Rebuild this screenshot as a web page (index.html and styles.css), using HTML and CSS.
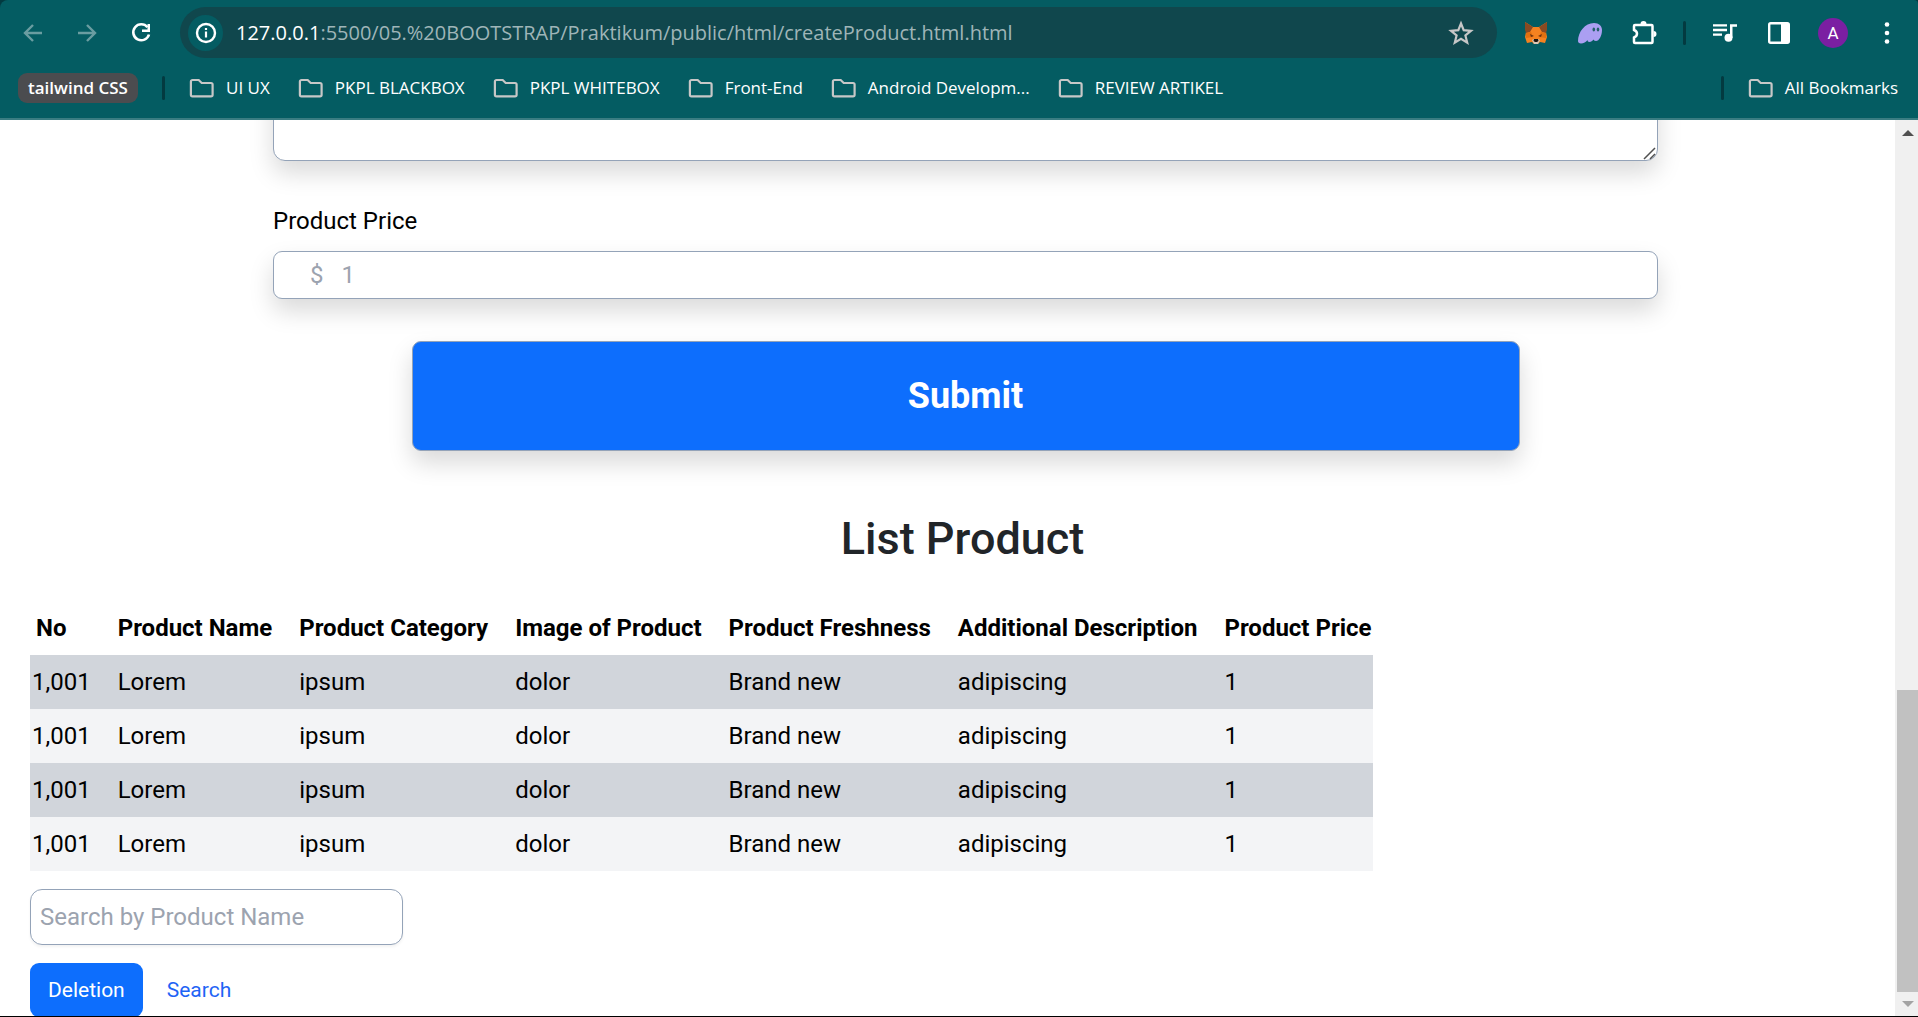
FILE: index.html
```html
<!DOCTYPE html>
<html lang="en">
<head>
<meta charset="utf-8">
<meta name="viewport" content="width=device-width, initial-scale=1">
<title>Create Product</title>
<link rel="stylesheet" href="styles.css">
</head>
<body>
<svg class="defs" aria-hidden="true">
  <symbol id="folder" viewBox="0 0 25 20"><path d="M3.5 2h6.2l3 3h9.3a1.6 1.6 0 0 1 1.6 1.600v10.200a1.600 1.600 0 0 1-1.600 1.600H3.500a1.600 1.600 0 0 1-1.600-1.600V3.600A1.600 1.600 0 0 1 3.500 2z" fill="none" stroke="#c7c7c7" stroke-width="2.200"/></symbol>
</svg>
<header class="chrome">
  <div class="toolbar">
    <button class="tool dim" aria-label="Back"><svg width="20" height="20" viewBox="0 0 20 20"><path d="M19 10H2.500M10 2l-8 8 8 8" fill="none" stroke="currentColor" stroke-width="2.400"/></svg></button>
    <button class="tool dim" aria-label="Forward"><svg width="20" height="20" viewBox="0 0 20 20"><path d="M1 10h16.500M10 2l8 8-8 8" fill="none" stroke="currentColor" stroke-width="2.400"/></svg></button>
    <button class="tool" aria-label="Reload"><svg width="22" height="22" viewBox="0 0 22 22"><path d="M17.500 5.200A8 8 0 1 0 19 12.500" fill="none" stroke="currentColor" stroke-width="2.600"/><path d="M20 2v8h-8V7.500h5.500V2z" fill="currentColor"/></svg></button>
    <div class="omnibox">
      <button class="info" aria-label="Site information"><svg width="22" height="22" viewBox="0 0 22 22"><circle cx="11" cy="11" r="9" fill="none" stroke="#fff" stroke-width="2.400"/><path d="M11 9.500v6M11 6v2" stroke="#fff" stroke-width="2.200"/></svg></button>
      <span class="url"><b>127.0.0.1</b>:5500/05.%20BOOTSTRAP/Praktikum/public/html/createProduct.html.html</span>
      <button class="star" aria-label="Bookmark this tab"><svg width="26" height="26" viewBox="0 0 26 26"><path d="M13 3.500l2.700 6.700 7.300.6-5.600 4.700 1.800 7.100L13 18.700l-6.200 3.900 1.800-7.100L3 10.800l7.300-.6z" fill="none" stroke="#c7c7c7" stroke-width="2.200"/></svg></button>
    </div>
    <button class="tool" aria-label="MetaMask"><svg width="24" height="24" viewBox="0 0 24 24"><path d="M1 1l8 5h6l8-5-1 10 1 5-2 6-5-1-2 2h-4l-2-2-5 1-2-6 1-5z" fill="#f58220"/><path d="M1 1l8 5-3 5-4 1-1-4zM23 1l-8 5 3 5 4 1 1-4z" fill="#8a4a22"/><path d="M2 12l5-1 2 5-7 1zM22 12l-5-1-2 5 7 1z" fill="#e2700f"/><path d="M6 13l4 2-3 1zM18 13l-4 2 3 1z" fill="#6d3310"/><path d="M8 19l2-1h4l2 1-2 4h-4z" fill="#d9c8b8"/><path d="M10 18h4l.5 2-1.500 1h-2l-1.500-1z" fill="#20140e"/></svg></button>
    <button class="tool" aria-label="Phantom"><svg width="26" height="22" viewBox="0 0 26 22"><path d="M1 19C1 10 8 1 17 1c5 0 8 3 8 7 0 6-3 11-6 11-2 0-2-1-2.500-1.500-1 1.500-2.500 2.500-4 2.500-1.500 0-2-1-2-2C9 20 6.500 21.500 4 21.500 2 21.500 1 20.500 1 19z" fill="#ab9ff2"/><ellipse cx="16.800" cy="7.500" rx="1.300" ry="2" fill="#24606a"/><ellipse cx="21" cy="7.500" rx="1.300" ry="2" fill="#24606a"/></svg></button>
    <button class="tool" aria-label="Extensions"><svg width="26" height="28" viewBox="0 0 26 28"><path d="M4 6h16.500a1 1 0 0 1 1 1v16a1 1 0 0 1-1 1H4a1 1 0 0 1-1-1v-4.500c4-1.500 4-6 0-7.500V7a1 1 0 0 1 1-1z" fill="none" stroke="#fff" stroke-width="2.500"/><path d="M9.500 5a3 3 0 0 1 6 0zM22.500 12a3 3 0 0 1 0 6z" fill="#fff"/></svg></button>
    <i class="rule"></i>
    <button class="tool" aria-label="Media controls"><svg width="24" height="20" viewBox="0 0 24 20"><path d="M0 2.300h14M0 7h14M0 11.700h9" stroke="#fff" stroke-width="2.300"/><path d="M17 1.200h7v2.500h-4.500V15H17z" fill="#fff"/><circle cx="15.500" cy="14.800" r="4" fill="#fff"/></svg></button>
    <button class="tool" aria-label="Side panel"><svg width="22" height="22" viewBox="0 0 22 22"><rect x="1.200" y="1.200" width="19.600" height="19.600" rx="1.500" fill="none" stroke="#fff" stroke-width="2.400"/><path d="M13 1h8v20h-8z" fill="#fff"/></svg></button>
    <button class="tool" aria-label="Profile"><span class="avatar">A</span></button>
    <button class="tool" aria-label="Menu"><svg width="6" height="22" viewBox="0 0 6 22"><circle cx="3" cy="2.500" r="2.300" fill="#fff"/><circle cx="3" cy="11" r="2.300" fill="#fff"/><circle cx="3" cy="19.500" r="2.300" fill="#fff"/></svg></button>
  </div>
  <nav class="bookmarks">
    <button class="chip">tailwind CSS</button>
    <i class="rule"></i>
    <a class="mark" href="#"><svg width="25" height="20"><use href="#folder"/></svg>UI UX</a>
    <a class="mark" href="#"><svg width="25" height="20"><use href="#folder"/></svg>PKPL BLACKBOX</a>
    <a class="mark" href="#"><svg width="25" height="20"><use href="#folder"/></svg>PKPL WHITEBOX</a>
    <a class="mark" href="#"><svg width="25" height="20"><use href="#folder"/></svg>Front-End</a>
    <a class="mark" href="#"><svg width="25" height="20"><use href="#folder"/></svg>Android Developm...</a>
    <a class="mark" href="#"><svg width="25" height="20"><use href="#folder"/></svg>REVIEW ARTIKEL</a>
    <i class="rule push"></i>
    <a class="mark" href="#"><svg width="25" height="20"><use href="#folder"/></svg>All Bookmarks</a>
  </nav>
</header>
<div class="view">
  <main class="page">
    <form class="product-form">
      <div class="description-box">
        <textarea class="field description" aria-label="Additional Description"></textarea>
        <svg class="grip" width="13" height="13" viewBox="0 0 13 13" aria-hidden="true"><path d="M1 12L12 1M7 12l5-5" stroke="#505050" stroke-width="1.500"/></svg>
      </div>
      <label class="label" for="price">Product Price</label>
      <div class="field price"><span>$</span><input id="price" type="text" placeholder="1"></div>
      <button class="submit" type="button">Submit</button>
    </form>
    <h2 class="title">List Product</h2>
    <table class="products">
      <thead>
        <tr><th>No</th><th>Product Name</th><th>Product Category</th><th>Image of Product</th><th>Product Freshness</th><th>Additional Description</th><th>Product Price</th></tr>
      </thead>
      <tbody>
        <tr><td>1,001</td><td>Lorem</td><td>ipsum</td><td>dolor</td><td>Brand new</td><td>adipiscing</td><td>1</td></tr>
        <tr><td>1,001</td><td>Lorem</td><td>ipsum</td><td>dolor</td><td>Brand new</td><td>adipiscing</td><td>1</td></tr>
        <tr><td>1,001</td><td>Lorem</td><td>ipsum</td><td>dolor</td><td>Brand new</td><td>adipiscing</td><td>1</td></tr>
        <tr><td>1,001</td><td>Lorem</td><td>ipsum</td><td>dolor</td><td>Brand new</td><td>adipiscing</td><td>1</td></tr>
      </tbody>
    </table>
    <input class="search" type="text" placeholder="Search by Product Name" aria-label="Search by Product Name">
    <div class="actions">
      <button class="delete" type="button">Deletion</button>
      <button class="find" type="button">Search</button>
    </div>
  </main>
  <div class="scrollbar" aria-hidden="true">
    <svg class="arrow" width="12" height="6" viewBox="0 0 12 6"><path d="M0 6l6-6 6 6z" fill="#505050"/></svg>
    <div class="track"><div class="thumb"></div></div>
    <svg class="arrow" width="12" height="6" viewBox="0 0 12 6"><path d="M0 0l6 6 6-6z" fill="#a3a3a3"/></svg>
  </div>
</div>
</body>
</html>
```
FILE: styles.css
```css
* { box-sizing: border-box; }

body {
  margin: 0;
  height: 100vh;
  display: flex;
  flex-direction: column;
  background: #033a40;
  border-bottom: 1px solid #000;
  font-family: Roboto, sans-serif;
  font-size: 24px;
  line-height: 36px;
  color: #000;
  overflow: hidden;
}

button, input, textarea { font: inherit; color: inherit; margin: 0; }
button { border: 0; padding: 0; background: none; }
svg { display: block; flex: none; }
.defs { position: absolute; width: 0; height: 0; }

/* Browser chrome */
.chrome {
  flex: none;
  height: 120px;
  background: #045c62;
  border-bottom: 2px solid #3a7d82;
  border-radius: 8px 4px 0 0;
  font-family: "Open Sans", "Noto Sans", sans-serif;
  color: #fff;
}
.toolbar { display: flex; align-items: center; height: 65px; padding: 0 4px 0 6px; }
.tool { flex: none; width: 54px; height: 54px; display: flex; align-items: center; justify-content: center; color: #fff; }
.dim { color: #6a9da1; }
.omnibox {
  flex: 1;
  min-width: 0;
  height: 51px;
  margin: 0 12px;
  padding: 0 23px 0 8px;
  display: flex;
  align-items: center;
  border-radius: 26px;
  background: #10474d;
}
.info {
  flex: none;
  width: 35px;
  height: 36px;
  display: flex;
  align-items: center;
  justify-content: center;
  border-radius: 50%;
  background: #045c62;
}
.url { flex: 1; min-width: 0; margin-left: 13px; overflow: hidden; white-space: nowrap; font-size: 20px; color: #9fb5b8; }
.url b { font-weight: 400; color: #fff; }
.rule { flex: none; width: 3px; height: 24px; margin: 0 12px; border-radius: 2px; background: #033a40; }
.avatar {
  width: 30px;
  height: 30px;
  border-radius: 50%;
  background: #7b1fa2;
  font-family: Roboto, sans-serif;
  font-size: 17px;
  line-height: 30px;
  text-align: center;
}

.bookmarks { display: flex; align-items: center; height: 45px; padding: 0 20px 0 18px; font-size: 17px; line-height: 30px; white-space: nowrap; }
.chip { flex: none; width: 120px; height: 30px; border-radius: 9px; background: #4b4c4f; font-size: 17px; font-weight: 600; line-height: 30px; }
.bookmarks .rule { margin: 0 24px; }
.bookmarks .push { margin-left: auto; }
.mark { display: flex; align-items: center; gap: 12px; margin-right: 28px; color: #fff; text-decoration: none; }
.mark:last-child { margin-right: 0; }

/* Page */
.view { flex: 1; min-height: 0; display: flex; background: #fff; }
.page { flex: 1; min-width: 0; padding-left: 30px; overflow: hidden; }
.product-form { display: flex; flex-direction: column; margin: 0 237px 0 243px; }
.field, .submit { border: 1px solid #94a3b8; border-radius: 9px; box-shadow: 0 12px 24px rgba(0, 0, 0, .15); }
.description-box { position: relative; height: 120px; margin-top: -79px; }
.description { display: block; width: 100%; height: 100%; border-radius: 12px; background: #fff; resize: none; }
.grip { position: absolute; right: 2px; bottom: 1px; }
.label { margin-top: 42px; }
.price { display: flex; align-items: center; height: 48px; margin-top: 12px; padding-left: 36px; color: #9ca3af; background: #fff; }
.price input { flex: 1; min-width: 0; height: 46px; margin-left: 18px; padding: 0; border: 0; background: none; outline: 0; }
::placeholder { color: #9ca3af; opacity: 1; }
.submit { width: 80%; height: 110px; margin: 42px auto 0; background: #0d6efd; color: #fff; font-size: 36px; font-weight: 700; }
.title { margin: 61px 0 35px; font-size: 45px; font-weight: 500; line-height: 54px; text-align: center; color: #212529; }

.products { border-collapse: collapse; }
.products th, .products td { height: 54px; padding: 0 24px 0 3px; text-align: left; white-space: nowrap; }
.products td:first-child { padding-left: 2px; }
.products th:first-child { padding-left: 6px; }
.products th:last-child { padding-right: 1px; }
.products th { font-weight: 700; }
.products tbody tr:nth-child(odd) { background: #d1d5db; }
.products tbody tr:nth-child(even) { background: #f3f4f6; }

.search {
  display: block;
  width: 373px;
  height: 56px;
  margin-top: 18px;
  padding: 0 9px;
  border: 1px solid #94a3b8;
  border-radius: 12px;
  box-shadow: 0 2px 3px rgba(0, 0, 0, .05);
}
.actions { display: flex; gap: 24px; margin-top: 18px; font-size: 21px; line-height: 54px; }
.delete { height: 54px; padding: 0 18px; border-radius: 9px; background: #0d6efd; color: #fff; }
.find { color: #1f64f5; }

/* Scrollbar */
.scrollbar { flex: none; width: 23px; display: flex; flex-direction: column; align-items: center; padding: 10px 0 9px; background: #f0f0f0; }
.arrow { margin-left: 2px; }
.track { flex: 1; align-self: stretch; display: flex; align-items: flex-end; padding: 9px 0 9px 2px; }
.thumb { width: 100%; height: 302px; background: #c1c1c1; }
```
